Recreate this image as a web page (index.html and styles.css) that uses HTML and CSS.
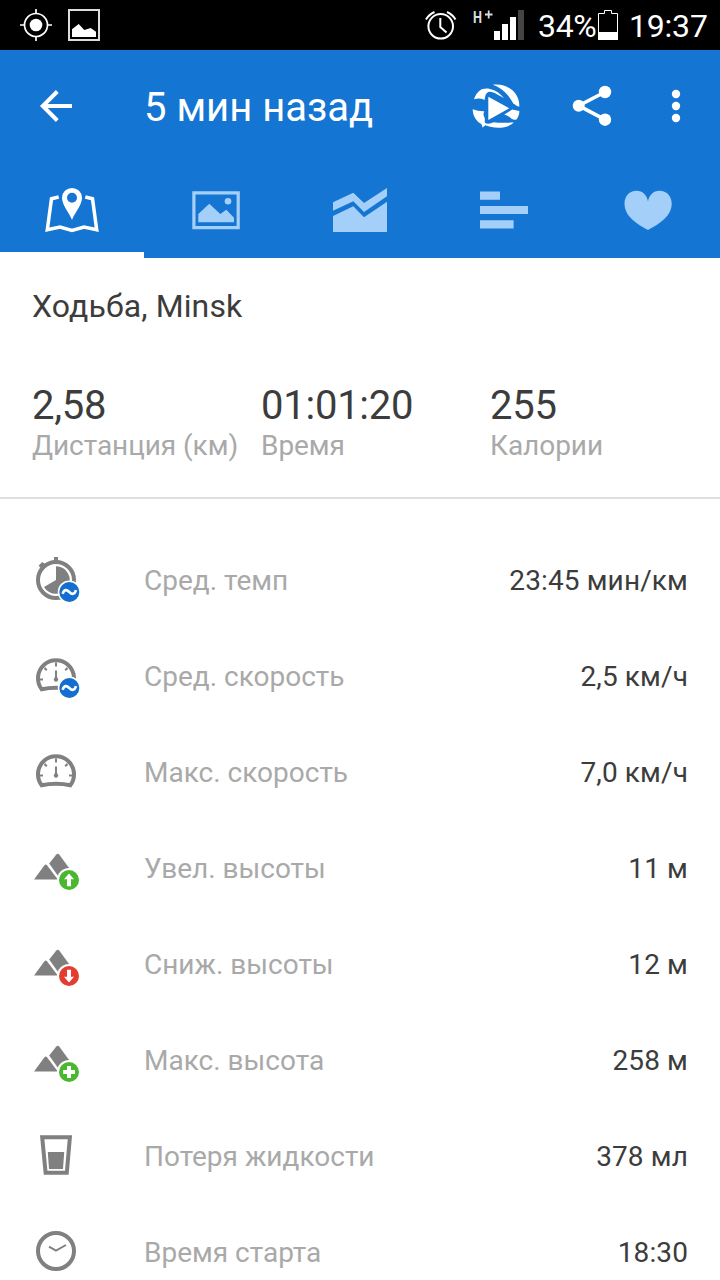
FILE: index.html
```html
<!DOCTYPE html>
<html lang="ru">
<head>
<meta charset="utf-8">
<title>5 мин назад</title>
<link rel="stylesheet" href="styles.css">
</head>
<body>
<svg class="defs" width="0" height="0" aria-hidden="true">
  <symbol id="gauge" viewBox="0 0 96 96">
    <path class="line4" d="M41.700 61.300A18 18 0 1 1 70.300 61.300Q56 58.300 41.700 61.300Z"/>
    <path class="line2" d="M40 51.500h3M69 51.500h3M56 34.500v4M44.500 40l2.300 2.300M67.500 40l-2.300 2.300M56 42.500v9"/>
    <circle cx="56" cy="51.500" r="2.200"/>
  </symbol>
  <symbol id="mountains" viewBox="0 0 96 96">
    <path d="M34 59.600L44.300 45.500Q45.700 43.600 47.200 45.500L57.800 59.600Z"/>
    <path d="M49.200 43.500L56.300 34.500Q57.700 32.800 59.200 34.500L70 49.300L59.500 58Z"/>
  </symbol>
  <symbol id="wave" viewBox="0 0 96 96">
    <circle class="halo" cx="69.300" cy="60" r="11.500"/>
    <circle class="blue" cx="69.300" cy="60" r="10"/>
    <path class="mark" d="M62.700 61.800C64 57.200 66.500 57.200 69.300 60S74.600 62.700 76 58.200"/>
  </symbol>
</svg>
<header class="status">
  <svg class="notices" width="110" height="50" viewBox="0 0 110 50">
    <circle cx="36" cy="25" r="6.300" fill="#fff"/>
    <circle cx="36" cy="25" r="11.500" fill="none" stroke="#fff" stroke-width="1.700"/>
    <path d="M36 9v5M36 36v5M20 25h5M47 25h5" stroke="#fff" stroke-width="1.700"/>
    <path d="M69 10h30v30H69z" fill="none" stroke="#ddd" stroke-width="2"/>
    <path d="M72 29.300L78.700 24l5.600 6 6.400-2 5.300 3.700V37H72z" fill="#fff"/>
  </svg>
  <svg class="radio" width="104" height="50" viewBox="424 0 104 50">
    <g fill="none" stroke="#fff" stroke-width="2">
      <circle cx="440.700" cy="26.300" r="12.300"/>
      <path d="M440.300 18v9l6.200 5.500M426 19.500A18 18 0 0 1 434.500 12M447 12A18 18 0 0 1 455.500 19.500"/>
    </g>
    <text class="net" x="473" y="22.500" textLength="9" lengthAdjust="spacingAndGlyphs">H</text>
    <path d="M485 14.500h7.500M488.700 10.500v8" stroke="#ddd" stroke-width="1.800"/>
    <path d="M494 31h6v9h-6zM502 24h6v16h-6zM510 17h6v23h-6z" fill="#fff"/>
    <path d="M518 10h6v30h-6z" fill="#444"/>
  </svg>
  <span class="percent">34%</span>
  <svg class="battery" width="20" height="50" viewBox="598 0 20 50">
    <path d="M598.500 13.500h6v-3h7v3h6v26h-19z" fill="none" stroke="#fff"/>
    <path d="M598 32h20v8h-20z" fill="#fff"/>
  </svg>
  <span class="time">19:37</span>
</header>
<div class="top">
  <div class="appbar">
    <svg width="144" height="112" viewBox="0 50 144 112"><path d="M72 106H43M57.300 91.500L42.800 106 57.300 120.500" fill="none" stroke="#fff" stroke-width="4"/></svg>
    <h1>5 мин назад</h1>
    <svg width="270" height="112" viewBox="450 50 270 112" fill="#fff">
      <path d="M488.300 96.700L509.300 108.300 488.300 120Z"/>
      <path d="M492.700 84.800C505 82.500 520 91 519.300 106.800Q516.500 106 513.300 103.500C508 94 502 88 492.700 84.800Z"/>
      <path d="M474 99.300C477.500 89.800 483 87.500 490 89C496 90.300 500 93.500 504 98C498 95.500 493 91 488.500 92C485.500 93 485 97 484.600 100Q479.500 97.500 474 99.300Z"/>
      <path d="M472.700 109.200Q478 111.500 484.300 111.300Q482.500 114.500 484.800 118V122.800Q488.500 125 493.500 122.300Q503 123.300 513.700 122.300C508 128.800 494 129.200 485.500 125.300L482.500 127.600 481.500 124.200C476.500 121.500 472.700 116 472.700 109.200Z"/>
      <path d="M504.300 114.500L512.300 109.500 519.300 111C519.500 114 518.300 117 516.500 119.500Q514 120.300 511.500 118.800Q509 116 504.300 114.500Z"/>
      <circle cx="578.700" cy="105.700" r="6"/><circle cx="605" cy="92" r="6.200"/><circle cx="605" cy="119.700" r="6.200"/>
      <path d="M605 92L578.700 105.700 605 119.700" fill="none" stroke="#fff" stroke-width="3.600"/>
      <circle cx="676" cy="94" r="4.200"/><circle cx="676" cy="106" r="4.200"/><circle cx="676" cy="118" r="4.200"/>
    </svg>
  </div>
  <nav class="tabs">
    <span class="tab active"><svg viewBox="0 162 144 96">
      <path d="M58.700 197L51.500 198.700 47.300 229.700 60 227 72 230.500 84 227 96.700 229.700 92.500 198.700 85.300 197" fill="none" stroke="#fff" stroke-width="3.500"/>
      <path fill="#fff" fill-rule="evenodd" d="M72 220C69 212 62 205 62 197.700a10 9.700 0 0 1 20 0C82 205 75 212 72 220ZM72 192.700a5 5 0 1 0 0 10a5 5 0 0 0 0-10Z"/></svg></span>
    <span class="tab"><svg viewBox="144 162 144 96">
      <path d="M193.900 192.900h44.300v34.700h-44.300z" fill="none" stroke="#a3cff8" stroke-width="3.200"/>
      <path d="M198.300 214l11-10.300 11 10.300 6-4.300 7.700 8v4.600h-35.700z"/><circle cx="228" cy="201.300" r="3.300"/></svg></span>
    <span class="tab"><svg viewBox="288 162 144 96">
      <path d="M333 202.300l20.300-9.600L364 203l23-15v8.300L364 212l-10.700-10.700-20.300 9.400zM333 216l20.300-9.700 10.700 11 23-15.600V232h-54z"/></svg></span>
    <span class="tab"><svg viewBox="432 162 144 96">
      <path d="M480 191.500h20v8.200h-20zM480 206h48v8h-48zM480 220.200h33.600v8.300H480z"/></svg></span>
    <span class="tab"><svg viewBox="576 162 144 96">
      <path d="M648 230C636 223.500 624.500 216 624.500 203.500C624.500 196 629.500 190.700 636.500 190.700C643 190.700 647 195.500 648 201.500C649 195.500 653 190.700 659.500 190.700C666.500 190.700 671.700 196 671.700 203.500C671.700 216 660 223.500 648 230Z"/></svg></span>
  </nav>
</div>
<main>
  <section class="summary">
    <h2>Ходьба, Minsk</h2>
    <div class="totals">
      <div><b>2,58</b><span>Дистанция (км)</span></div>
      <div><b>01:01:20</b><span>Время</span></div>
      <div><b>255</b><span>Калории</span></div>
    </div>
  </section>
  <ul class="stats">
    <li><svg viewBox="0 0 96 96"><circle class="line4" cx="56" cy="48" r="18"/><path d="M54 25h4v5h-4zM40.300 36l-1.600-2.500 3.500-3.500 2.800 2zM56 48V34.200A13.800 13.800 0 1 1 44 54.900Z"/><use href="#wave"/></svg><span>Сред. темп</span><b>23:45 мин/км</b></li>
    <li><svg viewBox="0 0 96 96"><use href="#gauge"/><use href="#wave"/></svg><span>Сред. скорость</span><b>2,5 км/ч</b></li>
    <li><svg viewBox="0 0 96 96"><use href="#gauge"/></svg><span>Макс. скорость</span><b>7,0 км/ч</b></li>
    <li><svg viewBox="0 0 96 96"><use href="#mountains"/><circle class="halo" cx="69" cy="60" r="12"/><circle class="green" cx="69" cy="60" r="10"/><path class="white" d="M69 53.500l5 5.700h-3v7h-4v-7h-3z"/></svg><span>Увел. высоты</span><b>11 м</b></li>
    <li><svg viewBox="0 0 96 96"><use href="#mountains"/><circle class="halo" cx="69" cy="60" r="12"/><circle class="red" cx="69" cy="60" r="10"/><path class="white" d="M69 66.500l5-5.700h-3v-7h-4v7h-3z"/></svg><span>Сниж. высоты</span><b>12 м</b></li>
    <li><svg viewBox="0 0 96 96"><use href="#mountains"/><circle class="halo" cx="69" cy="60" r="12"/><circle class="green" cx="69" cy="60" r="10"/><path class="white" d="M67 54h4v4h4v4h-4v4h-4v-4h-4v-4h4z"/></svg><span>Макс. высота</span><b>258 м</b></li>
    <li><svg viewBox="0 0 96 96"><path class="line4" d="M42.200 29.200h27.700l-3.100 35.600H45.600z"/><path d="M47.800 44h16.400L63 61H49z"/></svg><span>Потеря жидкости</span><b>378 мл</b></li>
    <li><svg viewBox="0 0 96 96"><circle class="line4" cx="56" cy="47" r="18"/><path class="line2" d="M49 42.700l7 4 10-5.700"/></svg><span>Время старта</span><b>18:30</b></li>
  </ul>
</main>
</body>
</html>
```
FILE: styles.css
```css
* { box-sizing: border-box; }
body {
  margin: 0;
  height: 1280px;
  overflow: hidden;
  background: #fff;
  color: #3c3c3c;
  font-family: Roboto, "Noto Sans", sans-serif;
}
svg { display: block; flex: none; }
.defs { display: none; }
h1, h2, b { margin: 0; font-weight: 400; }
.status {
  display: flex;
  height: 50px;
  background: #000;
  color: #fff;
  font-size: 32px;
  line-height: 52px;
}
.radio { margin-left: 314px; }
.net { font-size: 17px; font-weight: 700; fill: #ddd; }
.percent { width: 60px; margin-left: 10px; letter-spacing: -0.3px; white-space: nowrap; }
.time { margin-left: 11px; letter-spacing: -0.2px; }
.top { height: 208px; background: #1475d3; color: #fff; }
.appbar { display: flex; align-items: center; height: 112px; }
.appbar h1 { width: 306px; padding-top: 4px; font-size: 40px; line-height: 48px; white-space: nowrap; }
.tabs { display: flex; height: 96px; }
.tab { width: 144px; fill: #a3cff8; }
.tab svg { width: 144px; height: 96px; }
.active { border-bottom: 6px solid #fff; }
.active svg { margin-bottom: -6px; }
.summary { height: 241px; padding: 28px 32px 0; border-bottom: 2px solid #dedede; }
.summary h2 { font-size: 32px; line-height: 40px; letter-spacing: 0.1px; }
.totals { display: grid; grid-template-columns: 229px 229px 1fr; margin-top: 56px; }
.totals b { display: block; font-size: 40px; line-height: 48px; letter-spacing: -0.25px; }
.totals span { display: block; font-size: 28px; line-height: 32px; letter-spacing: -0.05px; color: #a9a9a9; white-space: nowrap; }
.stats { margin: 0; padding: 33px 0 0; list-style: none; }
.stats li { display: flex; align-items: center; height: 96px; padding-right: 32px; font-size: 28px; }
.stats svg { width: 96px; height: 96px; margin-right: 48px; fill: #808080; }
.stats span { flex: 1; color: #a9a9a9; }
.stats b { letter-spacing: 0.12px; }
.line4, .line2 { fill: none; stroke: #808080; }
.line4 { stroke-width: 4px; }
.line2 { stroke-width: 2px; }
.halo, .white { fill: #fff; }
.blue { fill: #126fd0; }
.green { fill: #4ab82f; }
.red { fill: #e43d30; }
.mark { fill: none; stroke: #fff; stroke-width: 2.6px; }
```
